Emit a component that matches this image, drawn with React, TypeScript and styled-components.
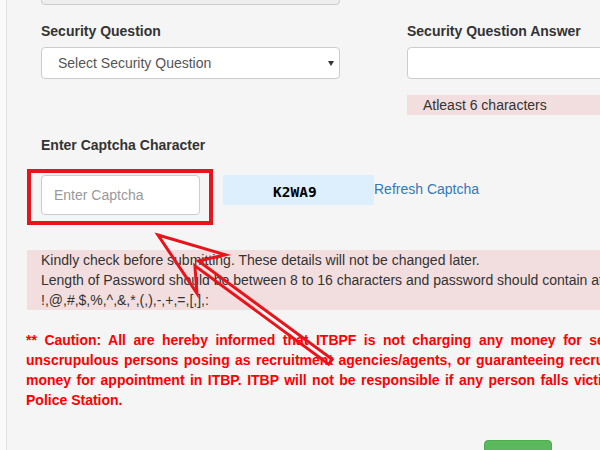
import React from "react";
import styled, { createGlobalStyle } from "styled-components";

const GlobalStyle = createGlobalStyle`
  html, body {
    margin: 0;
    padding: 0;
    background: #fafafa;
    overflow: hidden;
  }
  body {
    font-family: "Liberation Sans", Arial, sans-serif;
    font-size: 14px;
    line-height: 20px;
    color: #333;
  }
  * { box-sizing: border-box; }
`;

const Page = styled.div`
  position: relative;
  width: 600px;
  height: 450px;
  overflow: hidden;
`;

const Panel = styled.div`
  display: flow-root;
  margin-left: 6px;
  border-left: 1px solid #e2e2e2;
  background: #f5f5f5;
  min-height: 450px;
  width: 900px;
  padding-left: 20px;
`;

const TopField = styled.div`
  margin: -29px 0 0 14px;
  width: 299px;
  height: 34px;
  background: #eee;
  border: 1px solid #ccc;
  border-radius: 4px;
`;

const FieldGrid = styled.div`
  display: grid;
  grid-template-columns: 299px 299px;
  column-gap: 67px;
  padding-left: 14px;
  margin-top: 16px;
`;

const Column = styled.div`
  display: flex;
  flex-direction: column;
`;

const Label = styled.label`
  display: block;
  font-weight: bold;
  line-height: 20px;
  margin-bottom: 6px;
  color: #333;
`;

const SelectBox = styled.div`
  position: relative;
  height: 32px;
  background: #fff;
  border: 1px solid #ccc;
  border-radius: 4px;
  padding-left: 16px;
  line-height: 30px;
  color: #555;
`;

const Caret = styled.svg`
  position: absolute;
  right: 5px;
  top: 13px;
`;

const TextInput = styled.input<{ $h: number }>`
  display: block;
  width: 100%;
  height: ${(p) => p.$h}px;
  background: #fff;
  border: 1px solid #ccc;
  border-radius: 4px;
  padding: 0 12px;
  font: inherit;
  color: #555;
  outline: none;
  &::placeholder {
    color: #999;
  }
`;

const Hint = styled.div`
  margin-top: 16px;
  height: 20px;
  line-height: 20px;
  background: #f2dede;
  padding-left: 16px;
  color: #333;
`;

const CaptchaSection = styled.div`
  padding-left: 14px;
  margin-top: 20px;
`;

const CaptchaRow = styled.div`
  display: flex;
  align-items: flex-start;
  margin-top: 20px;
`;

const InputWrap = styled.div`
  position: relative;
  width: 159px;
  height: 40px;
`;

const RedFrame = styled.div`
  position: absolute;
  top: -6px;
  left: -14px;
  right: -13px;
  bottom: -10px;
  border: 4px solid #e8141c;
  pointer-events: none;
`;

const CaptchaImage = styled.div`
  margin-left: 23px;
  width: 151px;
  height: 30px;
  background: #ddeefc;
  border-radius: 2px;
  display: flex;
  align-items: center;
  padding: 4px 0 0 50px;
  font-family: "DejaVu Sans Mono", "Liberation Mono", monospace;
  font-weight: 600;
  font-size: 14.5px;
  color: #000;
`;

const RefreshLink = styled.a`
  margin-top: 4px;
  line-height: 20px;
  color: #337ab7;
  text-decoration: none;
`;

const Alert = styled.div`
  margin-top: 35px;
  padding: 0 14px;
  background: #f2dede;
  color: #333;
  line-height: 20px;
`;

const Caution = styled.div`
  margin-top: 20px;
  margin-left: -1px;
  color: #f00;
  font-weight: bold;
  line-height: 20px;
`;

const CautionLine = styled.span<{ $spacing: number }>`
  display: block;
  white-space: nowrap;
  word-spacing: ${(p) => p.$spacing}px;
`;

const ButtonRow = styled.div`
  margin-top: 30px;
  padding-left: 457px;
`;

const SubmitButton = styled.button`
  width: 68px;
  padding: 6px 12px;
  background: #5cb85c;
  border: 1px solid #4cae4c;
  border-radius: 4px;
  color: #fff;
  font: inherit;
  line-height: 20px;
`;

const Annotation = styled.svg`
  position: absolute;
  top: 0;
  left: 0;
  pointer-events: none;
`;

export default function App() {
  return (
    <Page>
      <GlobalStyle />
      <Panel>
        <TopField />
        <FieldGrid>
          <Column>
            <Label>Security Question</Label>
            <SelectBox>
              Select Security Question
              <Caret width="6" height="5" viewBox="0 0 6 5">
                <path d="M0 0 L6 0 L3 5 Z" fill="#333" />
              </Caret>
            </SelectBox>
          </Column>
          <Column>
            <Label>Security Question Answer</Label>
            <TextInput $h={32} readOnly />
            <Hint>Atleast 6 characters</Hint>
          </Column>
        </FieldGrid>

        <CaptchaSection>
          <Label>Enter Captcha Character</Label>
          <CaptchaRow>
            <InputWrap>
              <TextInput $h={40} placeholder="Enter Captcha" readOnly />
              <RedFrame />
            </InputWrap>
            <CaptchaImage>K2WA9</CaptchaImage>
            <RefreshLink href="#">Refresh Captcha</RefreshLink>
          </CaptchaRow>
        </CaptchaSection>

        <Alert>
          Kindly check before submitting. These details will not be changed later.
          <br />
          Length of Password should be between 8 to 16 characters and password should contain atleast one special character
          <br />
          !,@,#,$,%,^,&amp;,*,(,),-,+,=,[,],:
        </Alert>

        <Caution>
          <CautionLine $spacing={3.6}>
            ** Caution: All are hereby informed that ITBPF is not charging any money for selection/recruitment.
          </CautionLine>
          <CautionLine $spacing={1.5}>
            unscrupulous persons posing as recruitment agencies/agents, or guaranteeing recruitment on payment of money.
          </CautionLine>
          <CautionLine $spacing={1.5}>
            money for appointment in ITBP. ITBP will not be responsible if any person falls victim to such persons.
          </CautionLine>
          <CautionLine $spacing={0}>Police Station.</CautionLine>
        </Caution>

        <ButtonRow>
          <SubmitButton>Submit</SubmitButton>
        </ButtonRow>
      </Panel>

      <Annotation width="600" height="450" viewBox="0 0 600 450">
        <g transform="translate(158 235) rotate(36.3)">
          <polygon
            points="0,0 66,-24 48,-3 214,-3 214,3 48,3 66,24"
            fill="none"
            stroke="#e8141c"
            strokeWidth="3"
            strokeLinejoin="miter"
          />
        </g>
      </Annotation>
    </Page>
  );
}
